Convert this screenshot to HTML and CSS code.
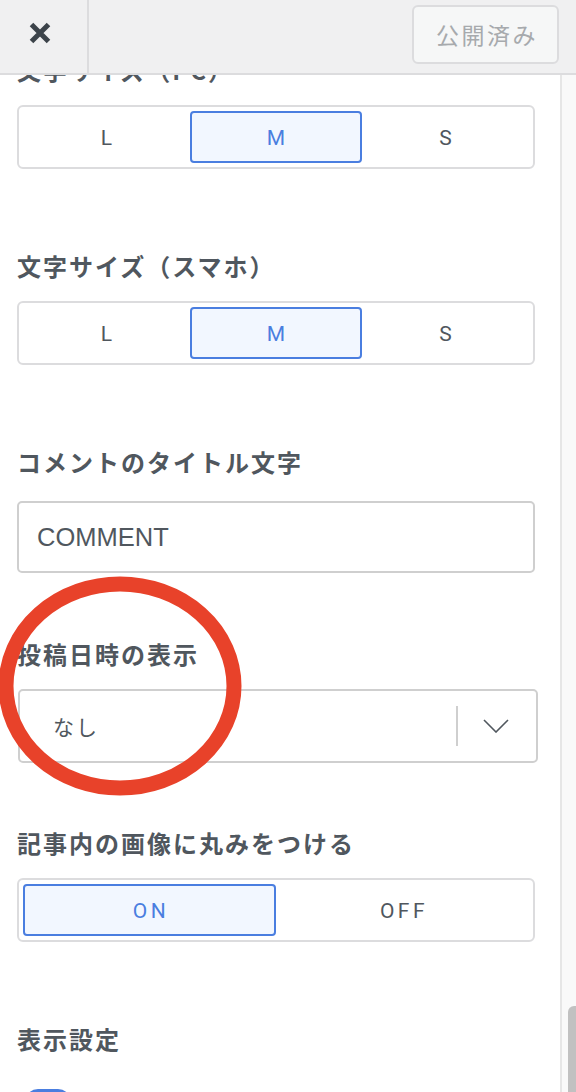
FILE: index.html
```html
<!DOCTYPE html>
<html lang="ja">
<head>
<meta charset="utf-8">
<title>Customizer</title>
<link rel="stylesheet" href="styles.css">
</head>
<body>
<header class="topbar">
  <div class="close-cell">
    <svg width="24" height="24" viewBox="0 0 24 24" aria-hidden="true"><path d="M3.5 3.5 L20.5 20.5 M20.5 3.5 L3.5 20.5" stroke="#3c434a" stroke-width="5" fill="none"/></svg>
  </div>
  <div class="topbar-fill"></div>
  <button class="publish" disabled>公開済み</button>
</header>

<div class="app">
  <main class="pane">
    <section class="field seg-field">
      <div class="label">文字サイズ（PC）</div>
      <div class="seg seg-3"><span>L</span><span class="on">M</span><span>S</span></div>
    </section>

    <section class="field seg-field">
      <div class="label">文字サイズ（スマホ）</div>
      <div class="seg seg-3"><span>L</span><span class="on">M</span><span>S</span></div>
    </section>

    <section class="field text-field">
      <div class="label">コメントのタイトル文字</div>
      <div class="input">COMMENT</div>
    </section>

    <section class="field select-field">
      <div class="label">投稿日時の表示</div>
      <div class="select">
        <span class="select-value">なし</span>
        <span class="select-sep"></span>
        <span class="select-arrow">
          <svg width="26" height="14" viewBox="0 0 26 14" aria-hidden="true"><polyline points="1,1 13,13 25,1" fill="none" stroke="#50575e" stroke-width="1.6"/></svg>
        </span>
      </div>
    </section>

    <section class="field seg-field">
      <div class="label">記事内の画像に丸みをつける</div>
      <div class="seg seg-2 spaced"><span class="on">ON</span><span>OFF</span></div>
    </section>

    <section class="field heading-field">
      <div class="label">表示設定</div>
      <div class="toggle"></div>
    </section>
  </main>
  <div class="track"><div class="thumb"></div></div>
</div>

<svg class="annotation" width="260" height="240" viewBox="0 0 260 240" aria-hidden="true">
  <ellipse cx="121" cy="116" rx="114" ry="102" fill="none" stroke="#e8422a" stroke-width="15"/>
</svg>
</body>
</html>
```

FILE: styles.css
```css
* { box-sizing: border-box; }

html, body {
  margin: 0;
  padding: 0;
  background: #ffffff;
  height: 1092px;
  overflow: hidden;
}

body {
  font-family: "Noto Sans CJK JP", Roboto, sans-serif;
  color: #50575e;
}

.topbar {
  position: fixed;
  top: 0;
  left: 0;
  right: 0;
  height: 75px;
  display: flex;
  align-items: flex-start;
  background: #f0f0f1;
  border-bottom: 2px solid #dcdcde;
  z-index: 5;
}

.close-cell {
  width: 89px;
  height: 73px;
  border-right: 2px solid #dcdcde;
  display: flex;
  align-items: center;
  justify-content: center;
  padding-right: 7px;
  padding-bottom: 8px;
}

.close-cell svg { display: block; }

.topbar-fill { flex: 1; }

.publish {
  margin: 5px 17px 0 0;
  width: 147px;
  height: 59px;
  border: 2px solid #dcdcde;
  border-radius: 6px;
  background: #f6f7f7;
  color: #a7aaad;
  font-family: "Noto Sans CJK JP", sans-serif;
  font-size: 23px;
  letter-spacing: 2.5px;
  padding: 0 0 2px 3px;
}

.app {
  display: flex;
  height: 1092px;
}

.pane {
  flex: 1;
  overflow: hidden;
  padding: 53px 25px 0 17px;
}

.track {
  width: 16px;
  background: #f9f9f9;
  border-left: 2px solid #e6e6e6;
  display: flex;
  flex-direction: column;
}

.thumb {
  margin-top: 1006px;
  margin-left: 6px;
  flex: 1;
  background: #c1c1c1;
  border-radius: 6px 0 0 0;
}

.label {
  font-size: 24px;
  font-weight: 700;
  letter-spacing: 2px;
  line-height: 34px;
  height: 34px;
  color: #50575e;
  white-space: nowrap;
  margin-bottom: 18px;
}

.seg-field { margin-bottom: 80px; }
.text-field { margin-bottom: 64px; }
.select-field { margin-bottom: 63px; }

.text-field .label { margin-bottom: 22px; }

.seg {
  display: grid;
  height: 64px;
  border: 2px solid #dcdcde;
  border-radius: 6px;
  padding: 4px;
}

.seg-3 { grid-template-columns: 1fr 1.03fr 1fr; }
.seg-2 { grid-template-columns: repeat(2, 1fr); }

.seg span {
  display: flex;
  align-items: center;
  justify-content: center;
  border: 2px solid transparent;
  border-radius: 4px;
  font-family: Roboto, "Liberation Sans", sans-serif;
  font-size: 21px;
  color: #50575e;
  padding-top: 1px;
}

.seg span.on {
  border-color: #4a7ee0;
  background: #f2f7ff;
  color: #4a7ee0;
}

.seg.spaced span { letter-spacing: 3.5px; padding-left: 3px; }

.input {
  height: 72px;
  border: 2px solid #cfcfcf;
  border-radius: 5px;
  display: flex;
  align-items: center;
  padding-left: 18px;
  font-family: "Liberation Sans", Arial, sans-serif;
  font-size: 25.5px;
  color: #50575e;
}

.select {
  margin-left: 1px;
  width: 520px;
  height: 74px;
  border: 2px solid #cfcfcf;
  border-radius: 5px;
  display: flex;
  align-items: center;
}

.select-value {
  flex: 1;
  padding-left: 33px;
  font-size: 21px;
  letter-spacing: 2px;
  color: #50575e;
}

.select-sep {
  width: 2px;
  height: 40px;
  background: #cfcfcf;
}

.select-arrow {
  width: 78px;
  display: flex;
  justify-content: center;
  align-items: center;
  padding-right: 2px;
}

.select-arrow svg { display: block; }

.heading-field .label { margin-bottom: 33px; }

.toggle {
  margin-left: 8px;
  width: 46px;
  height: 26px;
  border-radius: 13px;
  background: #4a7ee0;
}

.annotation {
  position: absolute;
  left: -1px;
  top: 570px;
  z-index: 3;
}
```
